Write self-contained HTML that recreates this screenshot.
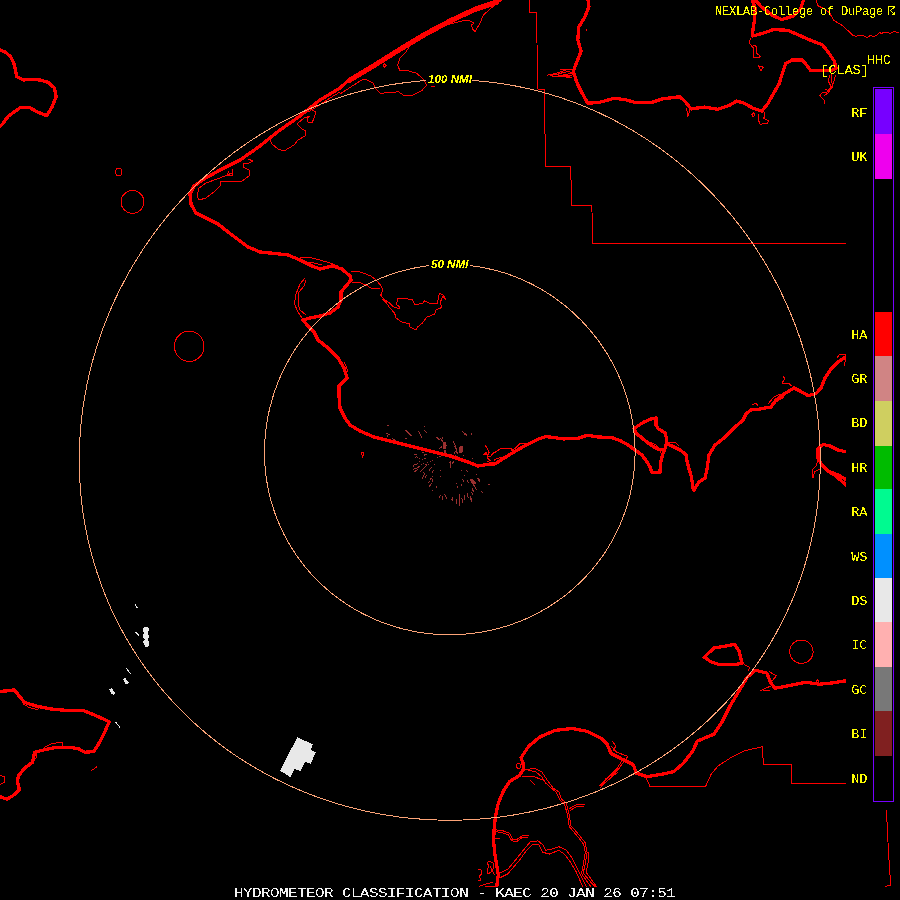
<!DOCTYPE html>
<html><head><meta charset="utf-8"><title>Hydrometeor Classification - KAEC</title>
<style>
html,body{margin:0;padding:0;background:#000;}
body{width:900px;height:900px;overflow:hidden;position:relative;font-family:"Liberation Mono",monospace;}
svg{position:absolute;left:0;top:0;}
.t{position:absolute;white-space:pre;color:#ffff00;line-height:1;filter:url(#crisp);}
.hdr{font-size:12px;letter-spacing:-0.2px;left:714.9px;top:6.3px;}
.lab{font-size:13.6px;letter-spacing:-0.16px;left:851.3px;}
.ttl{font-size:13px;letter-spacing:-0.42px;left:233.9px;top:887px;color:#f4f4f4;transform-origin:0 0;transform:scaleX(1.22);}
.rng{font-family:"Liberation Sans",sans-serif;font-weight:bold;font-style:italic;font-size:11.6px;}
</style></head><body>
<svg width="900" height="900" viewBox="0 0 900 900" shape-rendering="crispEdges">
<rect width="900" height="900" fill="#000"/>
<defs><filter id="crisp" x="0" y="0" width="100%" height="100%" color-interpolation-filters="sRGB"><feComponentTransfer><feFuncA type="discrete" tableValues="0 0 0 1 1 1"/></feComponentTransfer></filter><clipPath id="mc"><rect x="0" y="0" width="900" height="887"/></clipPath></defs>

<g fill="#e8e8e8" stroke="none"><polygon points="297.3,737.3 312.7,744.3 311,749.7 315.7,752.3 310.7,763.7 305,762 300.3,771 294.3,769 290.3,777 280,770.7"/><polygon points="144.5,626.5 147.5,626.5 148.8,629 148.5,631.5 147.5,633 148.8,635 148.8,638 147.3,640 149,642 149,645.5 147.5,647 145.5,646.5 143.3,643 143.5,641 145,639.8 143,637.5 143,634.5 144.5,633 143,631 143,628.5"/><polygon points="123,679 125.2,677.8 129,683 127.2,684.8 124.8,683"/><polygon points="109,689.5 111.5,688 115.3,693.2 113.8,695 111.5,694"/></g><g stroke="#e8e8e8" stroke-width="1" fill="none"><path d="M135,604.2L137.5,608.3M135.3,631.7L139.5,636.3M126.2,668L130.5,673.7M115.3,721.7L120,727.5"/></g><path d="M414.1,454.4L416.9,454.4M415.2,457.5L416.3,456.7M416.3,456.7L417.7,457.5M422.2,452.5L423.8,452.5M424.1,455.6L424.1,454.4M424.1,454.4L426.9,454.4M424.1,458.6L425.8,458.6M413.3,466.1L414.7,464.4M414.7,464.4L417.7,463.9M413.3,469.4L416.3,468.3M416.3,468.3L419.1,466.7M414.4,471.7L418.0,469.2M420.5,471.4L426.3,465.6M425.8,464.4L426.9,465.3M429.1,470.3L431.6,467.5M432.4,472.2L433.6,470.3M422.4,478.3L424.7,473.3M423.6,472.2L423.7,472.3M425.2,477.2L426.9,475.3M430.2,479.2L431.6,478.3M432.4,481.7L432.4,479.4M428.3,482.5L429.7,481.4M429.4,486.4L431.6,483.3M450.2,467.8L450.2,461.7M450.2,461.7L449.4,462.8M452.4,463.3L453.6,461.7M439.4,497.5L440.5,495.3M442.4,499.4L442.4,496.1M444.7,494.4L446.3,497.2M446.3,497.2L446.3,498.9M451.9,499.4L452.4,497.2M444.1,450.0L444.1,452.2M445.8,452.2L445.8,450.0M454.4,453.3L455.5,451.1M456.9,452.8L457.9,452.2M451.9,454.7L452.4,455.6M419.4,458.3L419.4,458.4M422.4,459.4L422.5,459.5M419.4,461.4L419.4,461.4M421.3,464.4L421.4,464.5M423.6,463.3L423.6,463.4M427.4,462.5L427.5,462.6M428.6,464.4L428.6,464.5M430.5,461.4L430.6,461.4M432.4,460.3L432.5,460.3M434.4,464.4L434.4,464.5M437.4,457.5L437.5,457.6M439.9,456.4L440.0,456.4M440.5,470.6L440.6,470.6M440.5,476.4L440.6,476.4M432.4,476.4L432.5,476.4M432.4,490.3L432.5,490.3M436.3,486.9L436.4,487.0M456.3,483.3L456.4,483.4M457.4,486.9L457.5,487.0M455.2,455.6L455.3,455.6M457.4,456.7L457.5,456.7M388.0,425.3L388.3,425.6M386.7,433.3L389.3,434.4M387.3,435.7L388.0,436.3M392.7,438.9L395.3,440.0M406.0,430.7L408.7,433.3M408.7,433.3L411.3,436.0M405.3,438.0L406.7,438.4M418.7,431.7L420.0,434.0M420.0,434.0L421.6,437.3M424.7,426.0L424.9,426.3M424.7,430.7L426.4,432.3M436.7,437.3L439.3,439.7M440.7,438.7L442.7,441.3M442.0,437.3L442.4,438.0M453.3,442.0L455.3,445.3M454.7,446.0L456.7,448.7M456.0,448.7L457.3,454.0M462.7,431.7L465.3,434.7M464.7,433.3L466.7,435.3M471.3,434.0L471.6,434.3M439.3,448.7L442.0,446.7M452.0,500.7L452.0,498.0M456.3,503.3L456.3,499.3M459.6,505.3L459.6,494.7M462.7,502.0L462.0,498.7M464.7,499.3L464.0,495.3M468.0,497.3L467.3,494.0M471.3,501.3L470.0,496.0M472.0,500.0L471.7,498.7M464.7,475.3L464.9,475.7M467.3,480.7L468.7,482.7M473.3,484.0L476.0,489.3M472.0,488.0L473.3,491.3M478.7,480.0L480.0,482.0M481.3,491.3L482.7,492.7M488.7,484.3L488.9,484.5M476.0,474.7L476.3,474.9M461.3,470.7L461.6,470.9M466.7,470.7L467.2,471.2M461.3,484.7L461.6,485.1M472.0,492.7L472.7,494.0M478.0,478.7L479.3,480.0M462.7,479.3L463.3,481.3M472.0,458.7L472.3,458.9M463.3,455.3L463.7,455.7M478.0,464.7L478.3,464.9" stroke="#9a3030" stroke-width="1" stroke-linecap="square" fill="none"/><g fill="#9a3030"><polygon points="442.7,442.5 445.5,442 446.7,445 446,449.3 443.5,449 442.5,446"/><polygon points="458.5,448 460,446 462.7,446.5 462.7,452 461,453.3 458.5,452"/><polygon points="469.5,479 472,478.5 476,483 475,484.5 472,483.5"/></g>
<g clip-path="url(#mc)" fill="none" stroke="#ff0000" stroke-linejoin="round" stroke-linecap="round">
<g stroke-width="3.3">
<polyline points="-2,49 0,50 5.5,52.2 10.5,56.7 13.9,63.3 15.5,70 16.7,76.7 23.3,80 32.2,79.4 40,80 47.8,82.2 54.4,87.8 56.1,96.7 52.2,106.7 46.7,115.6 37.8,112.2 30,107.8 20,107.8 14.4,111.7 7.8,116.7 2.2,124.4 -2,128"/>
<polyline points="503,-2 500,0 475,8.3 450,20 425,33.3 400,48.3 375,64 350,79 340,88 320,100 300,116 280,130 260,146 240,160 220,170 204,179 194,186 190,194 191,204 196,213 206,218 218,224 228,232 236,238 248,247 260,252 276,253.6 288,255 300,260 312,266 320,269 332,266 342,269 350,276 351,280 346,286 341,292 341,300 338,307 330,313 320,316 310,318 303,320 308,326 314,332 318,340 328,348 338,358 344,368 347,378 339,386 339,396 340,408 345,418 350,425 360,431 374,437 390,441 410,446 430,451 450,456 468,462 478,466 490,464 494.7,464 509.3,454.8 524,446.2 538.7,438.9 546,436.5 563.1,438.9 577.8,438.4 587.6,435.2 597.3,436.9 612,437.7 620,440.5 628,445 635,450 642,455 647,462 650,467 652,472.5 660,472.5 660.5,463 662.5,455 664.5,450 658,449 653,446.5 648,443 642,438 637,434 634,428.5 643,422.5 651,419 656,418 656,425 658,428.5 665,433 666.5,438 666.5,443.5 664.5,450 666.5,443.5 672,446 680,450 686,454.5 687,461 689,469 691.5,477 693,488 694,490 699,482 705,478 707,469 709,455 715,445 724,438 734,428 743,420 746,414 751,410 760,409 771,407 776,400 784,394 794,388 800,391 808,395.6 816,393.6 821,388 825,378 831,369 838,362 847,356"/>
<polyline points="497,3 475,10.3 450,22 425,35.3 400,50.3 375,66 350,81"/>
<polyline points="751.7,-2 755.3,8.7 754.6,18.8 753.1,28.9 752.4,36.1 763.2,33.2 773.3,29.6 787.8,30.3 797.9,34.7 810.9,40.4 822.4,44.8 828.2,52 834,60.7 836.2,67.9 831.1,70.8 822.4,70.8 810.9,70.8 806.6,65 802.2,60 792.1,60 785.6,63.6 782.7,72.2 779.1,83.8 773.3,93.9 767.6,104 761.8,111.2 753.1,108.3 744.4,103.3 736.7,101.1 728.9,105.6 717.8,109.3 704.4,107.1 691.1,108.9 685.6,102.2 680,96.7 662.2,98.9 651.1,102.7 635.6,102.7 626.7,100 614.4,98.2 600,102.2 587.8,103.3 582.2,93.3 576.7,82.2 573.3,71.1 576.7,62.2 581.1,51.1 577.8,40 578.9,26.7 584.4,17.8 588.9,6.7 587.8,-2"/>
<polyline points="753,-2 761.8,7.2 773.3,15.9 782,19.5 793.6,15.9 800.8,8.7 804,-2"/>
<polyline points="847,452 838,450 830,446 823,444.4 818,449 818,458 822,465 828,471 836,476 847,486"/>
<polyline points="828,471 838,475 847,480"/>
<polyline points="-2,691.6 7.2,690.8 14.4,689.8 20.2,697.3 24.6,702.4 36.1,706 50.6,708.9 65,710.3 83.8,710.8 93.9,714.7 109.1,721.6 105.4,730.6 99.7,742.1 93.9,751.5 85.2,752.2 78,748.6 69.3,747.2 57.8,747.2 46.2,749.3 34.7,752.2 32.5,762.3 24.6,768.1 18.8,775.3 17.3,781.1 19.5,789.8 13,795.6 7.2,799.2 -2,796"/>
<polyline points="496.4,889 498.3,874.9 496.4,863.6 494.6,852.2 493.6,840.9 494.2,827.7 495.5,816.3 498.3,803.1 504,789.9 509.7,781.4 519.1,775.7 523.8,769.1 522.9,762.5 521,757.8 528.6,746.4 539.9,737 555,730.4 572,728.5 587.1,731.3 602.2,738.9 606.9,743.9 611.1,753.6 622.2,759.2 633.3,764.7 636.1,773 647.2,776.7 661.1,774.4 673.6,771.7 683.3,763.3 693,750.8 697.2,741.1 713.9,734.2 722.2,721.7 730.6,705 738.9,691.1 747.2,677.2 755.6,670.3 766.7,673 770.8,682.8 775,688.3 788.9,685.6 805.6,682.2 819.4,684.2 833.3,682.8 847,680.6"/>
<polyline points="704.2,657.2 713.9,648 725,646.1 734.7,644.4 738.9,650.8 742.2,663.3 733.3,664.7 719.4,664.7 711.1,661.9 704.2,657.2"/>
</g><g stroke-width="1">
<polyline points="529.5,-2 529.5,12.1 536.4,12.1 537,43.3 537.6,89 544.2,89.6 544.8,124.3 545.7,166.2 570.8,166.2 571.4,205.2 591.9,205.2 592.5,243.3 847,243.3"/>
<polyline points="645.8,777.2 650,786.4 705.6,786.4 711.1,774.4 718,766 730.6,757.8 744.4,750.8 762.5,746.7 763.3,764.2 791.1,764.2 791.7,783.3 847,783.3"/>
<polyline points="496.7,3.3 483.3,15 480,23.3 477,28 475,31.7 472.5,29 471.7,25 474,23 470,20.8 463.3,20.8 450,24 443,26.7 436,29"/>
<polyline points="411.7,43.3 405,53.3 400,58.3 397.5,65 400,70.8 408.3,70.8 416.7,73.3 423.3,79.2 426.7,85 421.7,90.8 413.3,95 403.3,95 398.3,91.7 391.7,92.5 380,93.3 375,88.3 373.3,83.3 366.7,79.7 361.7,80 350,87.5 340,94"/>
<polyline points="431.5,86.5 434.5,86.5"/>
<polyline points="383,65 384.5,64 386,65.5 384.5,67 383,65"/>
<polyline points="312,110 316,112 314,118 312,123 308,122 307,118 310,116 304,118 297,124 302,129 306,131 305,136 298,140 294,145 284,151 278,149 272,144 270,140"/>
<polyline points="248,159 253,161 249,163 244,163 243,167 249,170 249,176 242,181 230,182 221,181 220,186 214,192 206,198 199,200 197,196 199,188 206,183 220,178 232,173"/>
<polyline points="233,169 232,176 227,175 229,171"/>
<polyline points="340,92 330,98 318,106 308,112"/>
<polyline points="305,278 300,284 296,294 294.4,304 298,312 302,318"/>
<polyline points="306,280 304,286 299,292 298,304 300,310 306,315"/>
<polyline points="300,258 308,257 320,260 330,263 338,266"/>
<polyline points="306,262 314,263 322,265"/>
<polyline points="351,271 357.3,271.3 364,273.3 370.7,276 376,280 380.7,285.3 382.7,290 380.7,295.3 384,299.3 389.3,302.7 393.3,306.7 398.7,308.7 400,307.3 396.7,304.7 397.3,298.7 406.7,298.7 412.7,300 414.7,304.7 422.7,303.3 424,300.7 430.7,304 437.3,303.3 439.3,293.3 443.3,295.3 446,300 443,296 440,302.7 442,307.3 436,310 434.7,314 426.7,317.3 422.7,322.7 417.3,327.3 416,330 409.3,326.7 410,323.3 402.7,322.7 396,318 394.7,313.3 389.3,307.3 386.7,303.3 382.7,299.3"/>
<polyline points="352,282 360,282.7 366.7,285.3 372,288.7 380,288.7"/>
<polyline points="361.5,453 363.5,452.5 364,455 362.5,457 361.5,453"/>
<polyline points="485.3,445.3 487.7,449.2 489.2,452 487.7,455 483.8,454.3 486,452.5 487.7,455 487.7,458.6 490.4,460.1 486.9,462"/>
<polyline points="487.7,456.5 490.8,456.2 492.7,453.5 496.2,451.6 500.9,448.4 511,448.2 511.8,450.4 514.9,448.4 520.3,443.4 525.8,443.4 528,443"/>
<polyline points="494.7,461 494.7,459.3 497,458.6 501.7,457.4"/>
<polyline points="344,362 346,366 348,372"/>
<polyline points="818,460 816,466 812,470 813,478 814.4,472 820,469"/>
<polyline points="837,358 840,354 847,355"/>
<polyline points="844,366 846,358"/>
<polyline points="783,376 785,379 782,383 788,383 792,386"/>
<polyline points="752,405 756,403 758,406"/>
<polyline points="768,404 774,397 780,394 784,397 776,402"/>
<polyline points="668,443 675,442 679,446"/>
<polyline points="650,442 656,445 660,449 663,460"/>
<polyline points="815.2,-2 818.1,5.8 823.9,8.7 829.7,13 831.6,16.6 833.9,20.4 837.8,22.8 842.4,25.5 847.9,30.6 852.6,35.2 855.7,36.4 859.6,35.4 863.4,35.6 867.3,37.6 870.4,35.4 873.6,36.4 876.7,35.4 879.8,32.5 881.3,33.7 883.7,32.3 887.6,32.3 890.3,33.7 893.8,31.3 896.9,32.5 899,32.5"/>
<polyline points="750.2,38.3 749.5,43.3 753.1,47.7 753.8,57.8 758.9,57.8 760.3,56.3 756.7,53.4 756,46.2 753,45"/>
<polyline points="758.2,65.7 763.2,67.2 761,70.8 758.2,65.7"/>
<polyline points="829.7,75.1 828.2,80.9 831.1,86.7 826.8,92.4 822.4,92.4 819.6,95.3 823.9,99.7 824.6,103.3"/>
<polyline points="835.4,75.1 833.3,83.8 829.7,91 825.3,89.6"/>
<polyline points="832,73 831,80 833,86 828,93 824,96"/>
<polyline points="751.7,114.8 753.5,113 755,115 753,117 751.7,114.8"/>
<polyline points="758.9,114.1 758.2,119.9 760.3,124.2 767.6,123.5 768.3,120.6 763.9,118.4 764.7,112"/>
<polyline points="686.7,108.9 687.8,116.7 690,110"/>
<polyline points="560,70 571,69 574,71"/>
<polyline points="560,75.6 569,76.7 574,74"/>
<polyline points="547.7,75.1 555,73.5 560,72 566,70 572.3,69.4"/>
<polyline points="552,76.5 560,76 566,77 572,77"/>
<polyline points="586,29 586.5,31"/>
<polyline points="23.1,703.8 28.9,707.4 37.6,709.6 39,708.2"/>
<polyline points="44.8,747.2 52,743.6 62.1,742.1 62.8,745.7"/>
<polyline points="36.1,752.9 36.8,756.6 33.9,760.9"/>
<polyline points="-1,774.6 4.3,776.8 4.3,782.6 -1,784.7"/>
<polyline points="91,771 96.8,766.7"/>
<polyline points="524.8,770 534.2,768.2 541.8,771.9 547.4,780.4 553.1,788 558.8,791.8 561.6,799.3 566.3,803.1 569.2,814.4 571,825.8 577.7,833.3 585.2,842.8 587.1,852.2 585.2,863.6 583.3,873 590.9,882.4 596.6,888"/>
<polyline points="522.9,776.7 534.2,776.7 543.7,780.4 551.2,788 556.5,792.5 560,800 564.5,804 567.5,815 569.3,826.5 576,834.5 583.5,844 585.3,852.5 583.5,863.5 581.5,873.5 588,883 592,888"/>
<polyline points="589,852.2 588,863.6 586,872 594.7,884.3 598,888"/>
<polyline points="528,770 536,772 542,777 546,784"/>
<polyline points="569.2,808.8 575.8,805 585.2,804.1"/>
<polyline points="570,810.5 576,807 584,806"/>
<polyline points="530.4,780.4 534.2,784.2"/>
<polyline points="492.7,829.6 502.1,830.5 509.7,833.3 512.5,839 516.3,840 522.9,835.2 528.6,835.6"/>
<polyline points="493,831.5 502,832.5 508.5,835 511.5,840.5 516.5,841.8 523,837 528,837"/>
<polyline points="495.5,838.1 500.2,838.1"/>
<polyline points="500.2,873 507.8,869.2 517.2,857.9 524.8,848.4 530.4,841.8 538,840.9 542.7,844.7 545.6,850.3 551.2,849.4 558.8,846.6 566.3,850.3 572,857.9 577.7,869.2 581.5,876.8 587.1,888"/>
<polyline points="500.2,877.7 507.8,873.9 519.1,860.7 526.7,850.3 532.3,844.7 538.9,844.7 542.7,852.2 549.3,854.1 558.8,850.3 564.4,854.1 570.1,861.7 575.8,871.1 583.3,888"/>
<polyline points="487,863 489,861 493,863 494,868 491,872 488,874 487,870 489,866 487,863"/>
<polyline points="490,866 492,870 494.6,874.9"/>
<polyline points="478,869 481,870 482,874 479,876 481,880 478,881"/>
<polyline points="479.4,886.2 486,884 492.7,882.4"/>
<polyline points="481,888 490,886 497,886"/>
<polyline points="516,766 517.5,763.5 520,764 520.5,767.5 518,769 516,766"/>
<polyline points="600.3,788 603,783 606,778.6 612,775 619.2,769.1 621,765"/>
<polyline points="601,786 607,781 613,776 618,772"/>
<polyline points="600,785.6 608.3,777.2 616.7,768.9 622,760.6"/>
<polyline points="602,785.6 613.9,774.4 620.8,766 627.8,756.4 616.7,752.2 611,746"/>
<polyline points="612,741 616,746 613,751"/>
<polyline points="744.4,664.7 750,667.5 748,671"/>
<polyline points="769.4,671.7 776.4,675.8 772,681"/>
<polyline points="761,690.6 766,688 772,685.6"/>
<polyline points="763,691 770,690"/>
<polyline points="816,682 817.5,680 819,682"/>
<polyline points="886.5,810 887.5,833 888.5,851 889.5,868.5 890.5,881 890.5,885.5 888,885.5 885.5,886.8"/>
<polyline points="550,75.5 557,74.5 563,72.5 569,71.5 572,73 566,74.5 558,75.8 565,75.5 572,75.5"/>
</g>
<circle cx="132.5" cy="201.9" r="11.4" stroke-width="1"/><ellipse cx="189.2" cy="346.3" rx="14.8" ry="15.2" stroke-width="1"/><ellipse cx="118.7" cy="172" rx="3.2" ry="3.8" stroke-width="1"/><circle cx="801.4" cy="651.7" r="11.7" stroke-width="1"/>
</g>
<rect x="846" y="40" width="54" height="769.5" fill="#000"/>
<g fill="none" stroke="#fca478" stroke-width="1">
<polyline points="472.5,80.5 475.7,80.8 478.8,81.0 482.0,81.3 485.1,81.6 488.3,81.9 491.4,82.3 494.6,82.7 497.7,83.1 500.9,83.5 504.0,84.0 507.1,84.5 510.3,85.0 513.4,85.6 516.5,86.2 519.6,86.8 522.7,87.5 525.8,88.1 528.9,88.8 532.0,89.5 535.1,90.3 538.2,91.1 541.3,91.9 544.3,92.7 547.4,93.6 550.5,94.5 553.5,95.4 556.5,96.4 559.6,97.3 562.6,98.3 565.6,99.4 568.6,100.4 571.6,101.5 574.6,102.6 577.6,103.7 580.6,104.9 583.5,106.1 586.5,107.3 589.4,108.6 592.3,109.8 595.3,111.1 598.2,112.4 601.1,113.8 604.0,115.2 606.8,116.6 609.7,118.0 612.5,119.4 615.4,120.9 618.2,122.4 621.0,123.9 623.8,125.5 626.6,127.0 629.4,128.6 632.2,130.3 634.9,131.9 637.7,133.6 640.4,135.3 643.1,137.0 645.8,138.7 648.5,140.5 651.1,142.3 653.8,144.1 656.4,145.9 659.1,147.8 661.7,149.7 664.3,151.6 666.8,153.5 669.4,155.5 671.9,157.4 674.5,159.4 677.0,161.4 679.5,163.5 681.9,165.5 684.4,167.6 686.9,169.7 689.3,171.8 691.7,174.0 694.1,176.1 696.5,178.3 698.8,180.5 701.1,182.8 703.5,185.0 705.8,187.3 708.0,189.6 710.3,191.9 712.6,194.2 714.8,196.5 717.0,198.9 719.2,201.3 721.3,203.7 723.5,206.1 725.6,208.5 727.7,211.0 729.8,213.4 731.9,215.9 733.9,218.4 735.9,221.0 737.9,223.5 739.9,226.1 741.9,228.6 743.8,231.2 745.7,233.8 747.6,236.5 749.5,239.1 751.4,241.7 753.2,244.4 755.0,247.1 756.8,249.8 758.5,252.5 760.3,255.2 762.0,258.0 763.7,260.7 765.4,263.5 767.0,266.3 768.6,269.1 770.2,271.9 771.8,274.7 773.4,277.5 774.9,280.4 776.4,283.2 777.9,286.1 779.4,289.0 780.8,291.9 782.2,294.8 783.6,297.7 784.9,300.6 786.3,303.6 787.6,306.5 788.9,309.5 790.1,312.4 791.4,315.4 792.6,318.4 793.8,321.4 795.0,324.4 796.1,327.4 797.2,330.4 798.3,333.5 799.4,336.5 800.4,339.6 801.4,342.6 802.4,345.7 803.3,348.7 804.3,351.8 805.2,354.9 806.1,358.0 806.9,361.1 807.8,364.2 808.6,367.3 809.3,370.4 810.1,373.5 810.8,376.6 811.5,379.8 812.2,382.9 812.8,386.0 813.4,389.2 814.0,392.3 814.6,395.5 815.1,398.6 815.6,401.8 816.1,404.9 816.6,408.1 817.0,411.2 817.4,414.4 817.8,417.6 818.2,420.7 818.5,423.9 818.8,427.1 819.0,430.2 819.3,433.4 819.5,436.6 819.7,439.8 819.8,442.9 820.0,446.1 820.1,449.3 820.2,452.4 820.2,455.6 820.2,458.8 820.2,461.9 820.2,465.1 820.2,468.3 820.1,471.4 820.0,474.6 819.8,477.8 819.7,480.9 819.5,484.1 819.3,487.2 819.0,490.3 818.7,493.5 818.4,496.6 818.1,499.8 817.8,502.9 817.4,506.0 817.0,509.1 816.5,512.2 816.1,515.3 815.6,518.4 815.1,521.5 814.5,524.6 814.0,527.7 813.4,530.8 812.8,533.9 812.1,536.9 811.4,540.0 810.7,543.0 810.0,546.1 809.3,549.1 808.5,552.2 807.7,555.2 806.8,558.2 806.0,561.2 805.1,564.2 804.2,567.2 803.2,570.1 802.3,573.1 801.3,576.1 800.3,579.0 799.2,582.0 798.2,584.9 797.1,587.8 796.0,590.7 794.8,593.6 793.7,596.5 792.5,599.4 791.3,602.2 790.0,605.1 788.8,607.9 787.5,610.7 786.1,613.5 784.8,616.4 783.4,619.1 782.1,621.9 780.6,624.7 779.2,627.4 777.7,630.2 776.3,632.9 774.7,635.6 773.2,638.3 771.7,641.0 770.1,643.7 768.5,646.3 766.8,649.0 765.2,651.6 763.5,654.2 761.8,656.8 760.1,659.4 758.4,661.9 756.6,664.5 754.8,667.0 753.0,669.5 751.2,672.0 749.3,674.5 747.4,677.0 745.5,679.4 743.6,681.9 741.7,684.3 739.7,686.7 737.7,689.1 735.7,691.5 733.7,693.8 731.6,696.1 729.6,698.4 727.5,700.7 725.4,703.0 723.3,705.3 721.1,707.5 718.9,709.7 716.8,712.0 714.5,714.1 712.3,716.3 710.1,718.5 707.8,720.6 705.5,722.7 703.2,724.8 700.9,726.8 698.6,728.9 696.2,730.9 693.8,732.9 691.4,734.9 689.0,736.9 686.6,738.8 684.2,740.8 681.7,742.7 679.2,744.6 676.7,746.4 674.2,748.3 671.7,750.1 669.1,751.9 666.6,753.7 664.0,755.4 661.4,757.2 658.8,758.9 656.2,760.6 653.5,762.3 650.9,763.9 648.2,765.5 645.5,767.2 642.8,768.7 640.1,770.3 637.4,771.8 634.6,773.4 631.9,774.8 629.1,776.3 626.3,777.8 623.5,779.2 620.7,780.6 617.9,782.0 615.1,783.3 612.3,784.7 609.4,786.0 606.5,787.2 603.7,788.5 600.8,789.7 597.9,791.0 595.0,792.2 592.0,793.3 589.1,794.5 586.2,795.6 583.2,796.7 580.2,797.7 577.3,798.8 574.3,799.8 571.3,800.8 568.3,801.8 565.3,802.7 562.3,803.7 559.3,804.5 556.2,805.4 553.2,806.3 550.1,807.1 547.1,807.9 544.0,808.7 541.0,809.4 537.9,810.1 534.8,810.9 531.7,811.5 528.6,812.2 525.5,812.8 522.4,813.4 519.3,814.0 516.2,814.5 513.1,815.1 509.9,815.5 506.8,816.0 503.7,816.5 500.5,816.9 497.4,817.3 494.3,817.7 491.1,818.0 488.0,818.3 484.8,818.6 481.7,818.9 478.5,819.1 475.3,819.4 472.2,819.6 469.0,819.7 465.8,819.9 462.7,820.0 459.5,820.1 456.3,820.1 453.2,820.2 450.0,820.2 446.8,820.2 443.7,820.2 440.5,820.1 437.3,820.0 434.2,819.9 431.0,819.8 427.8,819.6 424.7,819.4 421.5,819.2 418.3,818.9 415.2,818.7 412.0,818.4 408.9,818.1 405.7,817.7 402.6,817.4 399.4,817.0 396.3,816.5 393.2,816.1 390.0,815.6 386.9,815.1 383.8,814.6 380.7,814.1 377.6,813.5 374.5,812.9 371.4,812.3 368.3,811.6 365.2,811.0 362.1,810.3 359.0,809.5 356.0,808.8 352.9,808.0 349.8,807.2 346.8,806.4 343.7,805.6 340.7,804.7 337.7,803.8 334.7,802.9 331.7,801.9 328.7,801.0 325.7,800.0 322.7,799.0 319.7,797.9 316.8,796.8 313.8,795.8 310.9,794.6 307.9,793.5 305.0,792.3 302.1,791.1 299.2,789.9 296.3,788.7 293.4,787.4 290.6,786.2 287.7,784.9 284.9,783.5 282.0,782.2 279.2,780.8 276.4,779.4 273.6,778.0 270.8,776.5 268.1,775.1 265.3,773.6 262.6,772.1 259.8,770.5 257.1,769.0 254.4,767.4 251.7,765.8 249.1,764.2 246.4,762.5 243.8,760.9 241.1,759.2 238.5,757.5 235.9,755.7 233.3,754.0 230.8,752.2 228.2,750.4 225.7,748.6 223.2,746.7 220.7,744.9 218.2,743.0 215.7,741.1 213.3,739.1 210.9,737.2 208.4,735.2 206.0,733.3 203.7,731.2 201.3,729.2 199.0,727.2 196.6,725.1 194.3,723.0 192.0,720.9 189.8,718.8 187.5,716.6 185.3,714.5 183.1,712.3 180.9,710.1 178.7,707.9 176.6,705.6 174.4,703.4 172.3,701.1 170.2,698.8 168.2,696.5 166.1,694.2 164.1,691.8 162.1,689.5 160.1,687.1 158.1,684.7 156.2,682.3 154.3,679.8 152.4,677.4 150.5,674.9 148.6,672.4 146.8,669.9 145.0,667.4 143.2,664.9 141.4,662.3 139.7,659.8 138.0,657.2 136.3,654.6 134.6,652.0 132.9,649.4 131.3,646.7 129.7,644.1 128.1,641.4 126.5,638.7 125.0,636.0 123.5,633.3 122.0,630.6 120.5,627.9 119.1,625.1 117.7,622.4 116.3,619.6 114.9,616.8 113.6,614.0 112.2,611.2 110.9,608.4 109.7,605.5 108.4,602.7 107.2,599.8 106.0,596.9 104.8,594.1 103.7,591.2 102.6,588.3 101.5,585.3 100.4,582.4 99.4,579.5 98.4,576.5 97.4,573.6 96.4,570.6 95.5,567.6 94.5,564.7 93.7,561.7 92.8,558.7 92.0,555.6 91.2,552.6 90.4,549.6 89.6,546.6 88.9,543.5 88.2,540.5 87.5,537.4 86.8,534.4 86.2,531.3 85.6,528.2 85.0,525.1 84.5,522.0 84.0,518.9 83.5,515.8 83.0,512.7 82.6,509.6 82.2,506.5 81.8,503.4 81.4,500.2 81.1,497.1 80.8,494.0 80.5,490.8 80.3,487.7 80.1,484.6 79.9,481.4 79.7,478.3 79.6,475.1 79.4,471.9 79.3,468.8 79.3,465.6 79.3,462.4 79.3,459.3 79.3,456.1 79.3,452.9 79.4,449.8 79.5,446.6 79.6,443.4 79.8,440.3 80.0,437.1 80.2,433.9 80.4,430.7 80.7,427.6 81.0,424.4 81.3,421.2 81.6,418.1 82.0,414.9 82.4,411.7 82.8,408.6 83.3,405.4 83.8,402.3 84.3,399.1 84.8,396.0 85.4,392.8 86.0,389.7 86.6,386.5 87.2,383.4 87.9,380.3 88.6,377.1 89.3,374.0 90.0,370.9 90.8,367.8 91.6,364.7 92.4,361.6 93.3,358.5 94.2,355.4 95.1,352.3 96.0,349.2 97.0,346.2 97.9,343.1 98.9,340.0 100.0,337.0 101.0,334.0 102.1,330.9 103.2,327.9 104.4,324.9 105.5,321.9 106.7,318.9 107.9,315.9 109.2,312.9 110.4,309.9 111.7,307.0 113.0,304.0 114.3,301.1 115.7,298.2 117.1,295.3 118.5,292.3 119.9,289.4 121.4,286.6 122.9,283.7 124.4,280.8 125.9,278.0 127.4,275.1 129.0,272.3 130.6,269.5 132.2,266.7 133.9,263.9 135.5,261.2 137.2,258.4 139.0,255.7 140.7,252.9 142.4,250.2 144.2,247.5 146.0,244.8 147.9,242.2 149.7,239.5 151.6,236.9 153.5,234.2 155.4,231.6 157.3,229.0 159.3,226.5 161.3,223.9 163.3,221.4 165.3,218.8 167.3,216.3 169.4,213.8 171.5,211.4 173.6,208.9 175.7,206.5 177.8,204.1 180.0,201.6 182.2,199.3 184.4,196.9 186.6,194.6 188.8,192.2 191.1,189.9 193.4,187.6 195.7,185.4 198.0,183.1 200.3,180.9 202.7,178.7 205.0,176.5 207.4,174.3 209.8,172.2 212.3,170.0 214.7,167.9 217.2,165.9 219.6,163.8 222.1,161.8 224.6,159.7 227.2,157.7 229.7,155.8 232.3,153.8 234.8,151.9 237.4,150.0 240.0,148.1 242.7,146.2 245.3,144.4 247.9,142.6 250.6,140.8 253.3,139.0 256.0,137.3 258.7,135.5 261.4,133.8 264.1,132.2 266.9,130.5 269.7,128.9 272.4,127.3 275.2,125.7 278.0,124.2 280.8,122.6 283.7,121.1 286.5,119.7 289.4,118.2 292.2,116.8 295.1,115.4 298.0,114.0 300.9,112.6 303.8,111.3 306.7,110.0 309.6,108.8 312.6,107.5 315.5,106.3 318.5,105.1 321.4,103.9 324.4,102.8 327.4,101.7 330.4,100.6 333.4,99.5 336.4,98.5 339.4,97.5 342.5,96.5 345.5,95.6 348.6,94.6 351.6,93.7 354.7,92.9 357.7,92.0 360.8,91.2 363.9,90.4 367.0,89.7 370.1,88.9 373.2,88.2 376.3,87.6 379.4,86.9 382.5,86.3 385.6,85.7 388.7,85.1 391.9,84.6 395.0,84.1 398.1,83.6 401.3,83.2 404.4,82.7 407.6,82.3 410.7,82.0 413.9,81.6 417.0,81.3 420.2,81.0 423.3,80.8 426.5,80.6"/>
<polyline points="469.5,265.6 471.1,265.8 472.6,266.0 474.1,266.2 475.7,266.4 477.2,266.6 478.8,266.9 480.3,267.1 481.9,267.4 483.4,267.7 484.9,268.0 486.5,268.3 488.0,268.6 489.5,269.0 491.0,269.3 492.6,269.7 494.1,270.0 495.6,270.4 497.1,270.8 498.6,271.3 500.1,271.7 501.6,272.1 503.1,272.6 504.6,273.0 506.1,273.5 507.6,274.0 509.1,274.5 510.5,275.0 512.0,275.6 513.5,276.1 514.9,276.7 516.4,277.2 517.9,277.8 519.3,278.4 520.7,279.0 522.2,279.7 523.6,280.3 525.0,280.9 526.5,281.6 527.9,282.3 529.3,282.9 530.7,283.6 532.1,284.3 533.5,285.0 534.9,285.8 536.3,286.5 537.7,287.3 539.0,288.0 540.4,288.8 541.7,289.6 543.1,290.4 544.4,291.2 545.8,292.0 547.1,292.9 548.4,293.7 549.8,294.6 551.1,295.4 552.4,296.3 553.7,297.2 555.0,298.1 556.2,299.0 557.5,299.9 558.8,300.9 560.0,301.8 561.3,302.8 562.5,303.7 563.8,304.7 565.0,305.7 566.2,306.7 567.4,307.7 568.6,308.7 569.8,309.7 571.0,310.8 572.2,311.8 573.3,312.9 574.5,313.9 575.6,315.0 576.8,316.1 577.9,317.2 579.0,318.3 580.2,319.4 581.3,320.5 582.4,321.7 583.4,322.8 584.5,324.0 585.6,325.1 586.6,326.3 587.7,327.5 588.7,328.7 589.7,329.9 590.8,331.1 591.8,332.3 592.8,333.5 593.8,334.7 594.7,336.0 595.7,337.2 596.7,338.5 597.6,339.7 598.5,341.0 599.5,342.3 600.4,343.6 601.3,344.8 602.2,346.1 603.1,347.5 603.9,348.8 604.8,350.1 605.6,351.4 606.5,352.8 607.3,354.1 608.1,355.4 608.9,356.8 609.7,358.2 610.5,359.5 611.3,360.9 612.0,362.3 612.8,363.7 613.5,365.1 614.2,366.5 614.9,367.9 615.6,369.3 616.3,370.7 617.0,372.1 617.7,373.6 618.3,375.0 619.0,376.4 619.6,377.9 620.2,379.3 620.8,380.8 621.4,382.2 622.0,383.7 622.6,385.2 623.1,386.6 623.7,388.1 624.2,389.6 624.7,391.1 625.2,392.6 625.7,394.0 626.2,395.5 626.7,397.0 627.1,398.5 627.6,400.1 628.0,401.6 628.4,403.1 628.8,404.6 629.2,406.1 629.6,407.6 630.0,409.2 630.3,410.7 630.7,412.2 631.0,413.8 631.3,415.3 631.6,416.8 631.9,418.4 632.2,419.9 632.4,421.5 632.7,423.0 632.9,424.5 633.2,426.1 633.4,427.6 633.6,429.2 633.8,430.8 633.9,432.3 634.1,433.9 634.2,435.4 634.4,437.0 634.5,438.5 634.6,440.1 634.7,441.7 634.8,443.2 634.9,444.8 634.9,446.3 635.0,447.9 635.0,449.5 635.0,451.0 635.0,452.6 635.0,454.1 635.0,455.7 634.9,457.3 634.9,458.8 634.8,460.4 634.7,461.9 634.7,463.5 634.6,465.0 634.4,466.6 634.3,468.1 634.2,469.7 634.0,471.2 633.8,472.8 633.7,474.3 633.5,475.9 633.3,477.4 633.0,478.9 632.8,480.5 632.6,482.0 632.3,483.5 632.0,485.1 631.8,486.6 631.5,488.1 631.1,489.6 630.8,491.2 630.5,492.7 630.1,494.2 629.8,495.7 629.4,497.2 629.0,498.7 628.6,500.2 628.2,501.7 627.8,503.2 627.3,504.7 626.9,506.1 626.4,507.6 625.9,509.1 625.5,510.6 625.0,512.0 624.4,513.5 623.9,514.9 623.4,516.4 622.8,517.8 622.3,519.3 621.7,520.7 621.1,522.1 620.5,523.6 619.9,525.0 619.3,526.4 618.6,527.8 618.0,529.2 617.3,530.6 616.7,532.0 616.0,533.4 615.3,534.8 614.6,536.1 613.9,537.5 613.1,538.9 612.4,540.2 611.6,541.6 610.9,542.9 610.1,544.2 609.3,545.6 608.5,546.9 607.7,548.2 606.9,549.5 606.0,550.8 605.2,552.1 604.3,553.4 603.5,554.7 602.6,555.9 601.7,557.2 600.8,558.5 599.9,559.7 599.0,560.9 598.1,562.2 597.1,563.4 596.2,564.6 595.2,565.8 594.2,567.0 593.2,568.2 592.3,569.4 591.3,570.6 590.2,571.7 589.2,572.9 588.2,574.0 587.1,575.2 586.1,576.3 585.0,577.4 584.0,578.6 582.9,579.7 581.8,580.8 580.7,581.8 579.6,582.9 578.5,584.0 577.3,585.0 576.2,586.1 575.1,587.1 573.9,588.2 572.7,589.2 571.6,590.2 570.4,591.2 569.2,592.2 568.0,593.1 566.8,594.1 565.6,595.1 564.4,596.0 563.1,597.0 561.9,597.9 560.6,598.8 559.4,599.7 558.1,600.6 556.9,601.5 555.6,602.4 554.3,603.2 553.0,604.1 551.7,604.9 550.4,605.8 549.1,606.6 547.8,607.4 546.4,608.2 545.1,609.0 543.8,609.8 542.4,610.5 541.0,611.3 539.7,612.0 538.3,612.8 536.9,613.5 535.6,614.2 534.2,614.9 532.8,615.6 531.4,616.3 530.0,616.9 528.6,617.6 527.2,618.2 525.7,618.9 524.3,619.5 522.9,620.1 521.4,620.7 520.0,621.3 518.6,621.8 517.1,622.4 515.6,622.9 514.2,623.5 512.7,624.0 511.2,624.5 509.8,625.0 508.3,625.5 506.8,626.0 505.3,626.4 503.8,626.9 502.3,627.3 500.8,627.7 499.3,628.2 497.8,628.6 496.3,628.9 494.8,629.3 493.3,629.7 491.8,630.0 490.3,630.4 488.7,630.7 487.2,631.0 485.7,631.3 484.1,631.6 482.6,631.9 481.1,632.1 479.5,632.4 478.0,632.6 476.4,632.8 474.9,633.1 473.4,633.3 471.8,633.4 470.3,633.6 468.7,633.8 467.1,633.9 465.6,634.1 464.0,634.2 462.5,634.3 460.9,634.4 459.4,634.5 457.8,634.6 456.2,634.6 454.7,634.7 453.1,634.7 451.6,634.7 450.0,634.7 448.4,634.7 446.9,634.7 445.3,634.7 443.8,634.6 442.2,634.6 440.6,634.5 439.1,634.4 437.5,634.3 436.0,634.2 434.4,634.1 432.9,634.0 431.3,633.8 429.7,633.7 428.2,633.5 426.6,633.3 425.1,633.1 423.6,632.9 422.0,632.7 420.5,632.5 418.9,632.2 417.4,632.0 415.9,631.7 414.3,631.4 412.8,631.1 411.3,630.8 409.7,630.5 408.2,630.1 406.7,629.8 405.2,629.4 403.7,629.1 402.2,628.7 400.6,628.3 399.1,627.9 397.6,627.5 396.1,627.0 394.7,626.6 393.2,626.1 391.7,625.6 390.2,625.2 388.7,624.7 387.3,624.2 385.8,623.6 384.3,623.1 382.9,622.6 381.4,622.0 380.0,621.5 378.5,620.9 377.1,620.3 375.6,619.7 374.2,619.1 372.8,618.4 371.4,617.8 370.0,617.2 368.6,616.5 367.2,615.8 365.8,615.1 364.4,614.4 363.0,613.7 361.6,613.0 360.3,612.3 358.9,611.5 357.5,610.8 356.2,610.0 354.8,609.3 353.5,608.5 352.2,607.7 350.8,606.9 349.5,606.0 348.2,605.2 346.9,604.4 345.6,603.5 344.3,602.7 343.1,601.8 341.8,600.9 340.5,600.0 339.3,599.1 338.0,598.2 336.8,597.3 335.5,596.3 334.3,595.4 333.1,594.4 331.9,593.5 330.7,592.5 329.5,591.5 328.3,590.5 327.1,589.5 326.0,588.5 324.8,587.5 323.7,586.4 322.5,585.4 321.4,584.3 320.3,583.3 319.2,582.2 318.1,581.1 317.0,580.0 315.9,578.9 314.8,577.8 313.7,576.7 312.7,575.6 311.6,574.4 310.6,573.3 309.6,572.1 308.6,571.0 307.6,569.8 306.6,568.6 305.6,567.4 304.6,566.2 303.6,565.0 302.7,563.8 301.7,562.6 300.8,561.3 299.9,560.1 299.0,558.9 298.1,557.6 297.2,556.3 296.3,555.1 295.4,553.8 294.6,552.5 293.7,551.2 292.9,549.9 292.1,548.6 291.3,547.3 290.5,546.0 289.7,544.7 288.9,543.3 288.1,542.0 287.4,540.7 286.6,539.3 285.9,537.9 285.2,536.6 284.4,535.2 283.7,533.8 283.1,532.4 282.4,531.1 281.7,529.7 281.1,528.3 280.4,526.9 279.8,525.4 279.2,524.0 278.6,522.6 278.0,521.2 277.4,519.7 276.9,518.3 276.3,516.9 275.8,515.4 275.2,514.0 274.7,512.5 274.2,511.0 273.7,509.6 273.2,508.1 272.8,506.6 272.3,505.1 271.9,503.7 271.4,502.2 271.0,500.7 270.6,499.2 270.2,497.7 269.8,496.2 269.5,494.7 269.1,493.2 268.8,491.6 268.5,490.1 268.1,488.6 267.8,487.1 267.6,485.6 267.3,484.0 267.0,482.5 266.8,481.0 266.5,479.4 266.3,477.9 266.1,476.4 265.9,474.8 265.7,473.3 265.5,471.7 265.4,470.2 265.2,468.6 265.1,467.1 265.0,465.5 264.9,464.0 264.8,462.4 264.7,460.9 264.6,459.3 264.6,457.8 264.5,456.2 264.5,454.6 264.5,453.1 264.5,451.5 264.5,450.0 264.5,448.4 264.6,446.8 264.6,445.3 264.7,443.7 264.8,442.2 264.9,440.6 265.0,439.0 265.1,437.5 265.2,435.9 265.4,434.4 265.5,432.8 265.7,431.3 265.9,429.7 266.1,428.1 266.3,426.6 266.5,425.0 266.7,423.5 267.0,422.0 267.2,420.4 267.5,418.9 267.8,417.3 268.1,415.8 268.4,414.2 268.7,412.7 269.1,411.2 269.4,409.7 269.8,408.1 270.2,406.6 270.6,405.1 271.0,403.6 271.4,402.1 271.8,400.5 272.2,399.0 272.7,397.5 273.2,396.0 273.6,394.5 274.1,393.0 274.6,391.5 275.1,390.1 275.7,388.6 276.2,387.1 276.8,385.6 277.3,384.2 277.9,382.7 278.5,381.2 279.1,379.8 279.7,378.3 280.3,376.9 281.0,375.4 281.6,374.0 282.3,372.6 283.0,371.2 283.6,369.7 284.3,368.3 285.0,366.9 285.8,365.5 286.5,364.1 287.2,362.7 288.0,361.4 288.8,360.0 289.5,358.6 290.3,357.2 291.1,355.9 291.9,354.5 292.8,353.2 293.6,351.8 294.4,350.5 295.3,349.2 296.2,347.9 297.0,346.6 297.9,345.3 298.8,344.0 299.7,342.7 300.7,341.4 301.6,340.1 302.5,338.9 303.5,337.6 304.5,336.4 305.4,335.1 306.4,333.9 307.4,332.7 308.4,331.5 309.4,330.2 310.4,329.0 311.5,327.9 312.5,326.7 313.6,325.5 314.6,324.3 315.7,323.2 316.8,322.0 317.9,320.9 319.0,319.8 320.1,318.7 321.2,317.6 322.3,316.5 323.5,315.4 324.6,314.3 325.8,313.2 327.0,312.2 328.1,311.1 329.3,310.1 330.5,309.0 331.7,308.0 332.9,307.0 334.1,306.0 335.3,305.0 336.6,304.0 337.8,303.1 339.1,302.1 340.3,301.2 341.6,300.2 342.9,299.3 344.1,298.4 345.4,297.5 346.7,296.6 348.0,295.7 349.3,294.8 350.6,294.0 352.0,293.1 353.3,292.3 354.6,291.5 356.0,290.7 357.3,289.8 358.7,289.1 360.0,288.3 361.4,287.5 362.8,286.8 364.2,286.0 365.5,285.3 366.9,284.6 368.3,283.8 369.7,283.2 371.2,282.5 372.6,281.8 374.0,281.1 375.4,280.5 376.9,279.9 378.3,279.2 379.7,278.6 381.2,278.0 382.6,277.4 384.1,276.9 385.6,276.3 387.0,275.8 388.5,275.2 390.0,274.7 391.4,274.2 392.9,273.7 394.4,273.2 395.9,272.7 397.4,272.3 398.9,271.8 400.4,271.4 401.9,271.0 403.4,270.6 404.9,270.2 406.4,269.8 408.0,269.4 409.5,269.1 411.0,268.7 412.5,268.4 414.1,268.1 415.6,267.8 417.1,267.5 418.7,267.2 420.2,267.0 421.8,266.7 423.3,266.5 424.9,266.3 426.4,266.0 427.9,265.8 429.5,265.7"/>
</g>
<rect x="873.5" y="87.5" width="20" height="714" fill="none" stroke="#7700ff" stroke-width="1"/>
<rect x="875" y="89" width="17" height="45" fill="#7700ff"/>
<rect x="875" y="134" width="17" height="45" fill="#ee00ee"/>
<rect x="875" y="312" width="17" height="44" fill="#ff0000"/>
<rect x="875" y="356" width="17" height="45" fill="#d08484"/>
<rect x="875" y="401" width="17" height="45" fill="#cfcf60"/>
<rect x="875" y="446" width="17" height="43" fill="#00bb00"/>
<rect x="875" y="489" width="17" height="45" fill="#00fa90"/>
<rect x="875" y="534" width="17" height="44" fill="#0090ff"/>
<rect x="875" y="578" width="17" height="44" fill="#e8e8e8"/>
<rect x="875" y="622" width="17" height="45" fill="#ffb0b0"/>
<rect x="875" y="667" width="17" height="44" fill="#787878"/>
<rect x="875" y="711" width="17" height="45" fill="#802020"/>
<g stroke="#ffff00" stroke-width="1" fill="none" stroke-linecap="butt"><path d="M888.5,6V15M888,6.5H895M894.5,7L890.5,10.5L894.5,14.5"/><polygon points="895,11.5 895,15 891.5,15" fill="#ffff00" stroke="none"/></g>
</svg>
<div class="t hdr">NEXLAB-College of DuPage</div>
<div class="t lab" style="left:867px;top:53.6px">HHC</div>
<div class="t lab" style="left:820.6px;top:63.6px">[CLAS]</div>
<div class="t lab" style="top:106.6px">RF</div>
<div class="t lab" style="top:151.0px">UK</div>
<div class="t lab" style="top:328.6px">HA</div>
<div class="t lab" style="top:373.0px">GR</div>
<div class="t lab" style="top:417.4px">BD</div>
<div class="t lab" style="top:461.8px">HR</div>
<div class="t lab" style="top:506.2px">RA</div>
<div class="t lab" style="top:550.6px">WS</div>
<div class="t lab" style="top:595.0px">DS</div>
<div class="t lab" style="top:639.4px">IC</div>
<div class="t lab" style="top:683.8px">GC</div>
<div class="t lab" style="top:728.2px">BI</div>
<div class="t lab" style="top:772.6px">ND</div>
<div class="t rng" style="left:428.1px;top:73px">100 NMI</div>
<div class="t rng" style="left:431px;top:258.3px">50 NMI</div>
<div class="t ttl">HYDROMETEOR CLASSIFICATION - KAEC 20 JAN 26 07:51</div>
</body></html>
